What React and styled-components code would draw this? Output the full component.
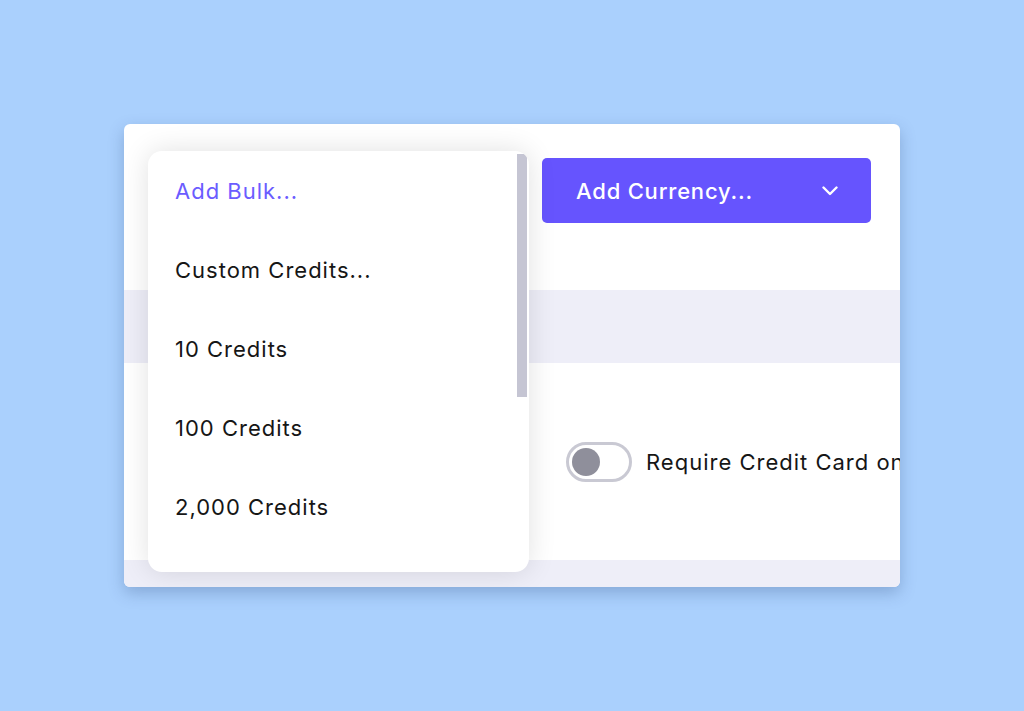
import React from "react";
import styled, { createGlobalStyle } from "styled-components";

const Global = createGlobalStyle`
  html, body { margin: 0; padding: 0; }
  body {
    background: #aad0fd;
    font-family: "Inter", "Noto Sans", sans-serif;
    width: 1024px;
    height: 711px;
    overflow: hidden;
  }
`;

const Stage = styled.div`
  padding: 124px 0 0 124px;
`;

const Card = styled.div`
  position: relative;
  width: 776px;
  height: 463px;
  background: #ffffff;
  border-radius: 6px;
  box-shadow: 0 6px 16px rgba(40, 70, 120, 0.28);
  overflow: hidden;
  display: flex;
  flex-direction: column;
`;

const Header = styled.div`
  height: 166px;
  box-sizing: border-box;
  padding: 34px 29px 0 0;
  display: flex;
  justify-content: flex-end;
  align-items: flex-start;
`;

const CurrencyButton = styled.button`
  width: 329px;
  height: 65px;
  border: none;
  border-radius: 5px;
  background: #6654fe;
  color: #ffffff;
  font-family: inherit;
  font-size: 22px;
  font-weight: 500;
  letter-spacing: 0.8px;
  display: flex;
  align-items: center;
  justify-content: space-between;
  padding: 0 33px 0 34px;
  cursor: pointer;
`;

const Band = styled.div`
  height: ${(p) => p.$h}px;
  background: #eeeef8;
  flex-shrink: 0;
`;

const ToggleRow = styled.div`
  flex: 1;
  display: flex;
  align-items: center;
  padding-left: 442px;
  gap: 14px;
  white-space: nowrap;
`;

const Switch = styled.div`
  width: 66px;
  height: 40px;
  box-sizing: border-box;
  border: 3px solid #c9c9d3;
  border-radius: 20px;
  display: flex;
  align-items: center;
  padding-left: 3px;
  flex-shrink: 0;
`;

const Knob = styled.div`
  width: 28px;
  height: 28px;
  border-radius: 50%;
  background: #8f8f9b;
`;

const Label = styled.span`
  font-size: 22px;
  letter-spacing: 1px;
  color: #161616;
`;

const Menu = styled.div`
  position: absolute;
  left: 24px;
  top: 27px;
  width: 381px;
  height: 421px;
  background: #ffffff;
  border-radius: 14px;
  box-shadow: 0 0 28px rgba(0, 0, 0, 0.12);
  display: flex;
  flex-direction: column;
  overflow: hidden;
`;

const Item = styled.div`
  height: 79px;
  flex-shrink: 0;
  display: flex;
  align-items: center;
  padding-left: 27px;
  font-size: 22px;
  letter-spacing: 1px;
  color: ${(p) => (p.$accent ? "#6b5cff" : "#161616")};
`;

const Scrollbar = styled.div`
  position: absolute;
  right: 2px;
  top: 3px;
  width: 10px;
  height: 243px;
  background: #c5c5d3;
`;

const Chevron = () => (
  <svg width="16" height="10" viewBox="0 0 16 10" fill="none">
    <path d="M1.5 1.5 L8 8 L14.5 1.5" stroke="#fff" strokeWidth="2.4" strokeLinecap="round" strokeLinejoin="round" />
  </svg>
);

const items = [
  { label: "Add Bulk...", accent: true },
  { label: "Custom Credits..." },
  { label: "10 Credits" },
  { label: "100 Credits" },
  { label: "2,000 Credits" },
];

export default function App() {
  return (
    <>
      <Global />
      <Stage>
        <Card>
          <Header>
            <CurrencyButton>
              <span>Add Currency...</span>
              <Chevron />
            </CurrencyButton>
          </Header>
          <Band $h={73} />
          <ToggleRow>
            <Switch>
              <Knob />
            </Switch>
            <Label>Require Credit Card on</Label>
          </ToggleRow>
          <Band $h={27} />
          <Menu>
            {items.map((it) => (
              <Item key={it.label} $accent={it.accent}>
                {it.label}
              </Item>
            ))}
            <Scrollbar />
          </Menu>
        </Card>
      </Stage>
    </>
  );
}
